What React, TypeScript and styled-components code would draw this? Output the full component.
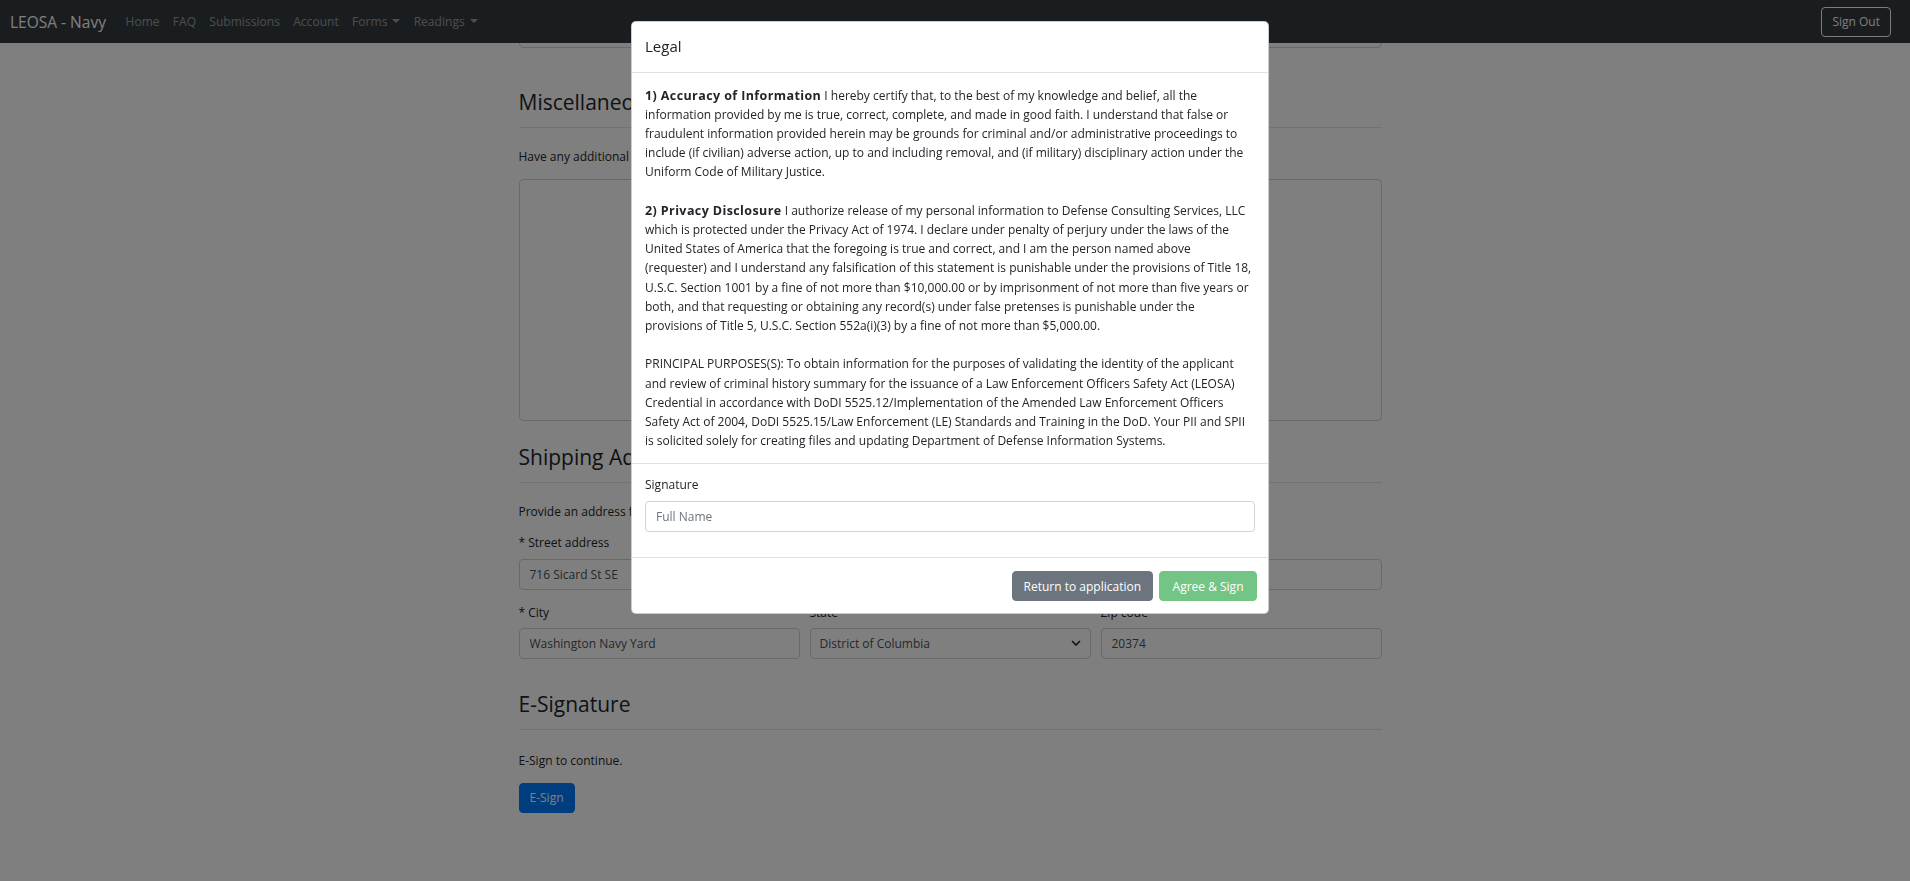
import React from 'react';
import styled, { createGlobalStyle, css } from 'styled-components';

const GlobalStyle = createGlobalStyle`
  html, body {
    margin: 0;
    padding: 0;
    background: #fff;
  }
  body {
    font-family: "Open Sans", "Liberation Sans", Arial, sans-serif;
    font-size: 12px;
    line-height: 19.5px;
    color: #212529;
    overflow: hidden;
  }
  * {
    box-sizing: border-box;
  }
`;

const NAV_ITEMS = [
  { label: 'Home' },
  { label: 'FAQ' },
  { label: 'Submissions' },
  { label: 'Account' },
  { label: 'Forms', dropdown: true },
  { label: 'Readings', dropdown: true },
];

function App() {
  return (
    <>
      <GlobalStyle />
      <StyledNavbar>
        <Brand>LEOSA - Navy</Brand>
        <NavList>
          {NAV_ITEMS.map((item) => (
            <li key={item.label}>
              <NavLink $dropdown={item.dropdown}>{item.label}</NavLink>
            </li>
          ))}
        </NavList>
        <SignOutButton type="button">Sign Out</SignOutButton>
      </StyledNavbar>

      <Page>
        <Content>
          <Input $scrolled defaultValue="" />

          <Section $top={41}>
            <SectionTitle>Miscellaneous</SectionTitle>
            <Lead>Have any additional information you would like to share with us?</Lead>
            <TextArea />
          </Section>

          <Section $top={23}>
            <SectionTitle>Shipping Address</SectionTitle>
            <Lead>Provide an address for us to mail your credential to.</Lead>
            <FormGroup>
              <Label>* Street address</Label>
              <Input defaultValue="716 Sicard St SE" />
            </FormGroup>
            <FormRow>
              <FormGroup>
                <Label>* City</Label>
                <Input defaultValue="Washington Navy Yard" />
              </FormGroup>
              <FormGroup>
                <Label>State</Label>
                <SelectWrap>
                  <Select defaultValue="DC">
                    <option value="DC">District of Columbia</option>
                  </Select>
                  <Chevron width="10" height="6" viewBox="0 0 10 6">
                    <polyline points="1,1 5,5 9,1" fill="none" stroke="#212529" strokeWidth="1.6" />
                  </Chevron>
                </SelectWrap>
              </FormGroup>
              <FormGroup>
                <Label>Zip code</Label>
                <Input defaultValue="20374" />
              </FormGroup>
            </FormRow>
          </Section>

          <Section $top={19}>
            <SectionTitle $gap={21}>E-Signature</SectionTitle>
            <Lead>E-Sign to continue.</Lead>
            <PrimaryButton type="button">E-Sign</PrimaryButton>
          </Section>
        </Content>
      </Page>

      <Backdrop />
      <ModalLayer>
        <ModalContent>
          <ModalHeader>
            <ModalTitle>Legal</ModalTitle>
          </ModalHeader>
          <ModalBody>
            <p>
              <b>1) Accuracy of Information</b> I hereby certify that, to the best of my knowledge and belief, all the
              information provided by me is true, correct, complete, and made in good faith. I understand that false or
              fraudulent information provided herein may be grounds for criminal and/or administrative proceedings to
              include (if civilian) adverse action, up to and including removal, and (if military) disciplinary action
              under the Uniform Code of Military Justice.
            </p>
            <p>
              <b>2) Privacy Disclosure</b> I authorize release of my personal information to Defense Consulting Services,
              LLC which is protected under the Privacy Act of 1974. I declare under penalty of perjury under the laws of
              the United States of America that the foregoing is true and correct, and I am the person named above
              (requester) and I understand any falsification of this statement is punishable under the provisions of
              Title 18, U.S.C. Section 1001 by a fine of not more than $10,000.00 or by imprisonment of not more than five
              years or both, and that requesting or obtaining any record(s) under false pretenses is punishable under the
              provisions of Title 5, U.S.C. Section 552a(i)(3) by a fine of not more than $5,000.00.
            </p>
            <p>
              PRINCIPAL PURPOSES(S): To obtain information for the purposes of validating the identity of the applicant
              and review of criminal history summary for the issuance of a Law Enforcement Officers Safety Act (LEOSA)
              Credential in accordance with DoDI 5525.12/Implementation of the Amended Law Enforcement Officers Safety
              Act of 2004, DoDI 5525.15/Law Enforcement (LE) Standards and Training in the DoD. Your PII and SPII is
              solicited solely for creating files and updating Department of Defense Information Systems.
            </p>
          </ModalBody>
          <SignatureBody>
            <Label>Signature</Label>
            <Input placeholder="Full Name" />
          </SignatureBody>
          <ModalFooter>
            <ModalButton type="button" $variant="secondary">
              Return to application
            </ModalButton>
            <ModalButton type="button" $variant="success" disabled>
              Agree &amp; Sign
            </ModalButton>
          </ModalFooter>
        </ModalContent>
      </ModalLayer>
    </>
  );
}

const StyledNavbar = styled.nav`
  position: relative;
  z-index: 1;
  height: 43px;
  display: flex;
  align-items: center;
  padding: 0 19px 0 10px;
  background: #343a40;
`;

const Brand = styled.a`
  margin-right: 13px;
  color: #fff;
  font-size: 15.5px;
  line-height: 24px;
  white-space: nowrap;
`;

const NavList = styled.ul`
  flex: 1;
  display: flex;
  margin: 0;
  padding: 0;
  list-style: none;
`;

const NavLink = styled.a<{ $dropdown?: boolean }>`
  display: block;
  padding: 0 6.6px;
  color: rgba(255, 255, 255, 0.5);
  font-size: 12px;
  line-height: 19.5px;
  letter-spacing: 0.05px;
  ${(p) =>
    p.$dropdown &&
    css`
      &::after {
        content: '';
        display: inline-block;
        margin-left: 5px;
        vertical-align: 3px;
        border-top: 4px solid;
        border-right: 4px solid transparent;
        border-left: 4px solid transparent;
      }
    `}
`;

const SignOutButton = styled.button`
  height: 30px;
  padding: 0 10px;
  border: 1px solid #f8f9fa;
  border-radius: 4px;
  background: transparent;
  color: #f8f9fa;
  font-family: inherit;
  font-size: 12px;
`;

const Page = styled.div`
  padding-right: 10px;
`;

const Content = styled.main`
  width: 863px;
  margin: 0 auto;
  padding-bottom: 40px;
`;

const Section = styled.section<{ $top: number }>`
  margin-top: ${(p) => p.$top}px;
`;

const SectionTitle = styled.h3<{ $gap?: number }>`
  margin: 0 0 ${(p) => p.$gap ?? 19}px;
  padding-bottom: 11px;
  border-bottom: 1px solid rgba(0, 0, 0, 0.1);
  font-size: 21px;
  font-weight: 400;
  line-height: 27px;
`;

const Lead = styled.p`
  margin: 0 0 12px;
`;

const FormGroup = styled.div`
  margin-bottom: 13px;
`;

const FormRow = styled.div`
  display: grid;
  grid-template-columns: repeat(3, 1fr);
  column-gap: 10px;
`;

const Label = styled.label`
  display: block;
  margin-bottom: 6px;
`;

const fieldBase = css`
  display: block;
  width: 100%;
  height: 31px;
  padding: 0 10px;
  border: 1px solid #ced4da;
  border-radius: 4px;
  background: #fff;
  color: #495057;
  font-family: inherit;
  font-size: 12px;
  outline: none;
  &::placeholder {
    color: #6c757d;
  }
`;

const Input = styled.input<{ $scrolled?: boolean }>`
  ${fieldBase}
  ${(p) =>
    p.$scrolled &&
    css`
      margin-top: -26px;
    `}
`;

const TextArea = styled.textarea`
  ${fieldBase}
  height: 242px;
  resize: none;
`;

const SelectWrap = styled.div`
  position: relative;
`;

const Select = styled.select`
  ${fieldBase}
  appearance: none;
  padding-left: 9px;
`;

const Chevron = styled.svg`
  position: absolute;
  right: 10px;
  top: 12px;
  pointer-events: none;
`;

const PrimaryButton = styled.button`
  height: 30.5px;
  padding: 0 10px;
  border: 1px solid #007bff;
  border-radius: 4px;
  background: #007bff;
  color: #fff;
  font-family: inherit;
  font-size: 12px;
`;

const Backdrop = styled.div`
  position: fixed;
  inset: 0;
  z-index: 10;
  background: rgba(0, 0, 0, 0.5);
`;

const ModalLayer = styled.div`
  position: fixed;
  inset: 0;
  z-index: 11;
  display: flex;
  justify-content: center;
  align-items: flex-start;
  padding: 21px 10px 0 0;
`;

const ModalContent = styled.div`
  width: 638px;
  display: flex;
  flex-direction: column;
  background: #fff;
  border: 1px solid rgba(0, 0, 0, 0.2);
  border-radius: 5px;
`;

const ModalHeader = styled.div`
  padding: 13px;
  border-bottom: 1px solid #dee2e6;
`;

const ModalTitle = styled.h5`
  margin: 0;
  font-size: 15px;
  font-weight: 400;
  line-height: 23.5px;
`;

const ModalBody = styled.div`
  padding: 13px;
  line-height: 19.2px;
  p {
    margin: 0 0 19.2px;
  }
  p:last-child {
    margin-bottom: 0;
  }
  b {
    font-size: 12.5px;
    font-weight: 700;
    letter-spacing: 0.4px;
  }
`;

const SignatureBody = styled.div`
  padding: 11px 13px 25px;
  border-top: 1px solid #dee2e6;
`;

const ModalFooter = styled.div`
  display: flex;
  justify-content: flex-end;
  gap: 6px;
  padding: 13px 11px 12px;
  border-top: 1px solid #dee2e6;
`;

const ModalButton = styled.button<{ $variant: 'secondary' | 'success' }>`
  height: 30.5px;
  border-radius: 4px;
  color: #fff;
  font-family: inherit;
  font-size: 12px;
  ${(p) =>
    p.$variant === 'secondary'
      ? css`
          padding: 0 11px;
          border: 1px solid #6c757d;
          background: #6c757d;
        `
      : css`
          padding: 0 12.5px;
          border: 1px solid #28a745;
          background: #28a745;
          &:disabled {
            opacity: 0.65;
          }
        `}
`;

export default App;
